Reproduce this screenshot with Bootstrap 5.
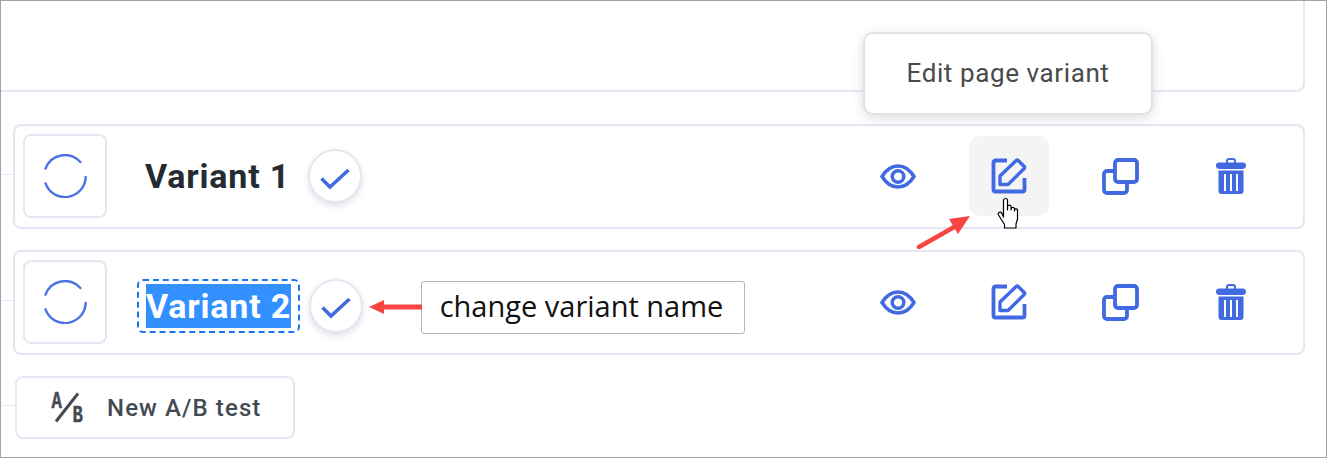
<!DOCTYPE html>
<html lang="en">
<head>
    <meta charset="UTF-8">
    <title>Page variants</title>
    <meta name="viewport" content="width=device-width, initial-scale=1">
    <link href="https://cdn.jsdelivr.net/npm/bootstrap@5.3.0/dist/css/bootstrap.min.css" rel="stylesheet">
    <style>
        body { margin: 0; background: #fff; font-family: Roboto, sans-serif; }
        .shot-frame { position: relative; width: 1327px; height: 458px; border: 1px solid #a3a3a3; overflow: hidden; background: #fff; }
        .top-panel { height: 91px; width: 1304px; border: 2px solid #e4e6f3; border-left: 0; border-top: 0; border-bottom-right-radius: 8px; }
        .variant-row { position: relative; width: 1292px; height: 105px; margin-left: 12px; border: 2px solid #e4e6f3; border-radius: 8px; padding: 0 0 1px 8px; }
        .variant-row::before, .ab-wrap::before { content: ""; position: absolute; left: -13px; top: 48px; width: 13px; height: 1px; background: #e4e6f3; }
        .first-row { margin-top: 32px; }
        .second-row { margin-top: 21px; }
        .thumb-box { width: 84px; height: 84px; border: 2px solid #e4e6f3; border-radius: 8px; }
        .variant-name { font-size: 34px; font-weight: 700; color: #252b33; letter-spacing: .8px; line-height: 44px; white-space: nowrap; }
        .name-one { margin-left: 38px; }
        .name-edit { margin: 7px 0 0 30px; padding: 3px 7px; border: 2px dashed #1a73f0; border-radius: 6px; }
        .name-edit span { display: block; background: #3390ff; color: #fff; }
        .check-round { width: 54px; height: 54px; padding-top: 5px; border-radius: 50%; border: 2px solid #e4e6f3; background: #fff; box-shadow: 0 3px 6px rgba(60, 70, 130, .16); flex-shrink: 0; }
        .check-one { margin-left: 18px; }
        .check-two { margin: 7px 0 0 9px; }
        .tool-set { margin-left: auto; margin-right: 32px; gap: 31px; }
        .tool-btn { width: 80px; height: 80px; border-radius: 10px; }
        .tool-hover { background: #f4f4f5; }
        .ab-wrap { position: relative; width: 280px; height: 63px; margin: 21px 0 0 14px; border: 2px solid #e4e6f3; border-radius: 8px; color: #444a54; font-size: 24px; font-weight: 500; letter-spacing: 1.1px; padding-left: 33px; gap: 21px; }
        .ab-wrap::before { left: -15px; top: 27px; width: 15px; }
        .ab-letter { font-family: "Liberation Mono", monospace; font-size: 24px; font-weight: 700; fill: #444a54; stroke: #444a54; stroke-width: .5px; }
        .hint-pop { position: absolute; left: 862px; top: 31px; width: 290px; height: 83px; background: #fff; border: 2px solid #e2e2e2; border-radius: 10px; box-shadow: 0 3px 12px rgba(0, 0, 0, .14); color: #4a4a4a; font-size: 26px; letter-spacing: .6px; }
        .note-box { position: absolute; left: 420px; top: 280px; width: 324px; height: 53px; padding: 0 3px 3px 0; background: #fff; border: 1px solid #b5b5b5; border-radius: 3px; color: #111; font-family: "Open Sans", sans-serif; font-size: 29px; }
        .over-svg { position: absolute; }
    </style>
</head>
<body>

<div class="shot-frame">
    <div class="top-panel"></div>

    <!-- Variant 1 -->
    <div class="variant-row first-row d-flex align-items-center">
        <div class="thumb-box d-flex align-items-center justify-content-center">
            <svg width="44" height="44" viewBox="0 0 44 44" fill="none" stroke="#4a72e4" stroke-width="2.4" stroke-linecap="round"><path d="M2.500 14.700A20.700 20.700 0 0 1 37.300 8"/><path d="M42.700 23A20.700 20.700 0 0 1 2.500 29.300"/></svg>
        </div>
        <div class="variant-name name-one">Variant 1</div>
        <div class="check-round check-one d-flex align-items-center justify-content-center">
            <svg width="30" height="22" viewBox="0 0 30 22" fill="none" stroke="#4169e1" stroke-width="3.500"><path d="M1.500 10.500 10 19 28.500 2"/></svg>
        </div>
        <div class="tool-set d-flex">
            <div class="tool-btn d-flex align-items-center justify-content-center">
                <svg width="36" height="25" viewBox="0 0 36 25" fill="none" stroke="#4169e1" stroke-width="3.500"><path d="M2 12.500C6 6 11.500 2 18 2s12 4 16 10.500C30 19 24.500 23 18 23S6 19 2 12.500Z"/><circle cx="18" cy="12.500" r="5.800"/></svg>
            </div>
            <div class="tool-btn tool-hover d-flex align-items-center justify-content-center">
                <svg width="36" height="36" viewBox="0 0 36 36" fill="none" stroke="#4169e1" stroke-width="3.800"><path d="M16 2.500H4.500a2 2 0 0 0-2 2v27a2 2 0 0 0 2 2h27a2 2 0 0 0 2-2V20"/><path d="M9 26.500V18L25.200 2.500a1.500 1.500 0 0 1 2 0l6 6a1.500 1.500 0 0 1 0 2L17 26.500Z" stroke-width="3.400" stroke-linejoin="round"/></svg>
            </div>
            <div class="tool-btn d-flex align-items-center justify-content-center">
                <svg width="37" height="37" viewBox="0 0 37 37" fill="none" stroke="#4169e1" stroke-width="3.800"><rect x="13" y="2" width="22" height="22" rx="3"/><path d="M13 13H5a3 3 0 0 0-3 3v16a3 3 0 0 0 3 3h17a3 3 0 0 0 3-3v-8"/></svg>
            </div>
            <div class="tool-btn d-flex align-items-center justify-content-center">
                <svg width="30" height="36" viewBox="0 0 30 36" fill="#4169e1"><path d="M10 4.500V3a3 3 0 0 1 3-3h4a3 3 0 0 1 3 3v1.500h6.800a3.200 3.200 0 0 1 0 6.500H3.200a3.200 3.200 0 0 1 0-6.500Zm2 0h6V3a1 1 0 0 0-1-1h-4a1 1 0 0 0-1 1Z"/><path fill-rule="evenodd" d="M2.500 12.500h25V33a3 3 0 0 1-3 3h-19a3 3 0 0 1-3-3ZM8 16v17h2V16Zm6 0v17h2V16Zm6 0v17h2V16Z"/></svg>
            </div>
        </div>
    </div>

    <!-- Variant 2 -->
    <div class="variant-row second-row d-flex align-items-center">
        <div class="thumb-box d-flex align-items-center justify-content-center">
            <svg width="44" height="44" viewBox="0 0 44 44" fill="none" stroke="#4a72e4" stroke-width="2.4" stroke-linecap="round"><path d="M2.500 14.700A20.700 20.700 0 0 1 37.300 8"/><path d="M42.700 23A20.700 20.700 0 0 1 2.500 29.300"/></svg>
        </div>
        <div class="variant-name name-edit"><span>Variant 2</span></div>
        <div class="check-round check-two d-flex align-items-center justify-content-center">
            <svg width="30" height="22" viewBox="0 0 30 22" fill="none" stroke="#4169e1" stroke-width="3.500"><path d="M1.500 10.500 10 19 28.500 2"/></svg>
        </div>
        <div class="tool-set d-flex">
            <div class="tool-btn d-flex align-items-center justify-content-center">
                <svg width="36" height="25" viewBox="0 0 36 25" fill="none" stroke="#4169e1" stroke-width="3.500"><path d="M2 12.500C6 6 11.500 2 18 2s12 4 16 10.500C30 19 24.500 23 18 23S6 19 2 12.500Z"/><circle cx="18" cy="12.500" r="5.800"/></svg>
            </div>
            <div class="tool-btn d-flex align-items-center justify-content-center">
                <svg width="36" height="36" viewBox="0 0 36 36" fill="none" stroke="#4169e1" stroke-width="3.800"><path d="M16 2.500H4.500a2 2 0 0 0-2 2v27a2 2 0 0 0 2 2h27a2 2 0 0 0 2-2V20"/><path d="M9 26.500V18L25.200 2.500a1.500 1.500 0 0 1 2 0l6 6a1.500 1.500 0 0 1 0 2L17 26.500Z" stroke-width="3.400" stroke-linejoin="round"/></svg>
            </div>
            <div class="tool-btn d-flex align-items-center justify-content-center">
                <svg width="37" height="37" viewBox="0 0 37 37" fill="none" stroke="#4169e1" stroke-width="3.800"><rect x="13" y="2" width="22" height="22" rx="3"/><path d="M13 13H5a3 3 0 0 0-3 3v16a3 3 0 0 0 3 3h17a3 3 0 0 0 3-3v-8"/></svg>
            </div>
            <div class="tool-btn d-flex align-items-center justify-content-center">
                <svg width="30" height="36" viewBox="0 0 30 36" fill="#4169e1"><path d="M10 4.500V3a3 3 0 0 1 3-3h4a3 3 0 0 1 3 3v1.500h6.800a3.200 3.200 0 0 1 0 6.500H3.200a3.200 3.200 0 0 1 0-6.500Zm2 0h6V3a1 1 0 0 0-1-1h-4a1 1 0 0 0-1 1Z"/><path fill-rule="evenodd" d="M2.500 12.500h25V33a3 3 0 0 1-3 3h-19a3 3 0 0 1-3-3ZM8 16v17h2V16Zm6 0v17h2V16Zm6 0v17h2V16Z"/></svg>
            </div>
        </div>
    </div>

    <!-- New test -->
    <div class="ab-wrap d-flex align-items-center">
        <svg width="36" height="48" viewBox="0 -8 36 48"><text class="ab-letter" transform="translate(1.500 16) scale(.72 1)">A</text><path d="M6 29.500 28 1.500" fill="none" stroke="#444a54" stroke-width="3"/><text class="ab-letter" transform="translate(22.500 30) scale(.72 1)">B</text></svg>
        <span>New A/B test</span>
    </div>

    <!-- overlays -->
    <div class="hint-pop d-flex align-items-center justify-content-center">Edit page variant</div>

    <div class="note-box d-flex align-items-center justify-content-center">change variant name</div>

    <svg class="over-svg" style="left:365px;top:295px" width="56" height="22" viewBox="0 0 56 22"><path d="M3 11 18 4v4.500h38v5H18V18Z" fill="#f94444"/></svg>

    <svg class="over-svg" style="left:915px;top:213px" width="58" height="38" viewBox="0 0 58 38"><path d="M3 33 40 12" stroke="#f94444" stroke-width="4.500" stroke-linecap="round"/><path d="M54 2 33 5l9 15Z" fill="#f94444"/></svg>

    <svg class="over-svg" style="left:995px;top:195px" width="24" height="34" viewBox="0 0 24 34"><path d="M7.500 21V4.500a2 2 0 0 1 4 0V14v-3a1.800 1.800 0 0 1 3.600 0v3-1.500a1.800 1.800 0 0 1 3.400 0V15v-1a1.600 1.600 0 0 1 3 0v9l-1.500 5v4H8.500v-3.500L2.500 19a2 2 0 0 1 3-2.500Z" fill="#fff" stroke="#000" stroke-width="1.200" stroke-linejoin="round"/></svg>
</div>

</body>
</html>
